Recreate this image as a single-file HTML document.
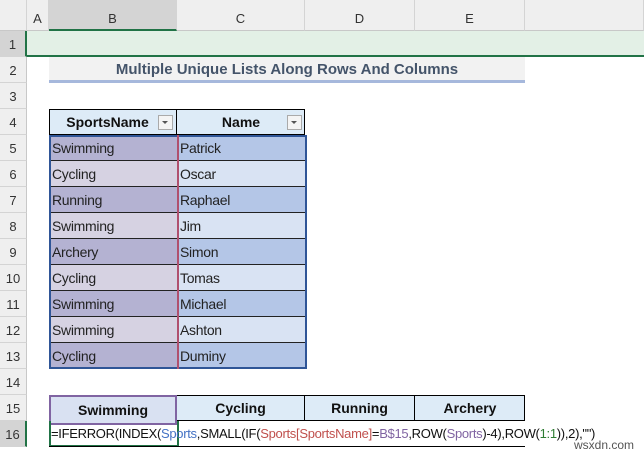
<!DOCTYPE html>
<html><head><style>
body{margin:0;width:644px;height:461px;overflow:hidden;background:#fff;font-family:"Liberation Sans",sans-serif;position:relative}
.a{position:absolute;box-sizing:border-box}
.ch{top:0;height:31px;background:#efefef;border-right:1px solid #d4d4d4;border-bottom:1px solid #c8c8c8;text-align:center;line-height:38px;font-size:13px;color:#333}
.rh{left:0;width:27px;height:26px;background:#efefef;border-bottom:1px solid #d4d4d4;border-right:1px solid #c8c8c8;text-align:center;line-height:28px;font-size:13px;color:#333}
.c{font-size:14px;letter-spacing:-0.3px;line-height:26px;padding-left:3px;color:#222}
.h{font-weight:bold;text-align:center;font-size:14px;line-height:26px;color:#111}
.dd{position:absolute;right:3px;top:6px;width:13px;height:13px;border:1px solid #aaa;background:#f4f4f4}
.dd:after{content:"";position:absolute;left:3px;top:5px;border-left:3px solid transparent;border-right:3px solid transparent;border-top:3px solid #555}
</style></head><body>
<div class="a ch" style="left:0;width:27px"></div>
<div class="a ch" style="left:27px;width:22px">A</div>
<div class="a ch" style="left:49px;width:128px;background:#d4d4d4;border-bottom:2px solid #217346">B</div>
<div class="a ch" style="left:177px;width:128px">C</div>
<div class="a ch" style="left:305px;width:110px">D</div>
<div class="a ch" style="left:415px;width:110px">E</div>
<div class="a ch" style="left:525px;width:119px"></div>
<div class="a" style="left:27px;top:31px;width:617px;height:26px;background:#e3f0e6;border-bottom:2px solid #217346"></div>
<div class="a" style="left:49px;top:57px;width:476px;height:26px;background:#f2f2f2;border-bottom:3px solid #a6b8dc;text-align:center;font-weight:bold;font-size:15px;line-height:26px;color:#44546a">Multiple Unique Lists Along Rows And Columns</div>
<div class="a" style="left:49px;top:109px;width:256px;height:26px;background:#ddebf7;border:1px solid #000"></div>
<div class="a h" style="left:49px;top:109px;width:128px;border-right:1px solid #000;padding-right:10px">SportsName<span class="dd"></span></div>
<div class="a h" style="left:177px;top:109px;width:128px">Name<span class="dd"></span></div>
<div id="t"></div>
<div class="a" style="left:49px;top:135px;width:258px;height:234px;border:2px solid #2f5597"></div>
<div class="a" style="left:177px;top:135px;width:2px;height:234px;background:#b0506e"></div>
<div class="a" style="left:49px;top:395px;width:476px;height:26px;background:#ddebf7;border:1px solid #000"></div>
<div class="a h" style="left:49px;top:395px;width:128px;background:#d9e1f2;border:2px solid #8064a2">Swimming</div>
<div class="a h" style="left:177px;top:395px;width:128px;border-right:1px solid #000">Cycling</div>
<div class="a h" style="left:305px;top:395px;width:110px;border-right:1px solid #000">Running</div>
<div class="a h" style="left:415px;top:395px;width:110px">Archery</div>
<div class="a" style="left:49px;top:421px;width:130px;height:26px;border:2px solid #217346;border-top:none"></div>
<div class="a" style="left:49px;top:446px;width:476px;height:1px;background:#000"></div>
<div class="a" style="left:51px;top:422px;font-size:13px;letter-spacing:-0.3px;line-height:24px;white-space:nowrap;color:#111">=IFERROR(INDEX(<span style="color:#4472c4">Sports</span>,SMALL(IF(<span style="color:#c0504d">Sports[SportsName]</span>=<span style="color:#8064a2">B$15</span>,ROW(<span style="color:#8064a2">Sports</span>)-4),ROW(<span style="color:#2e7d32">1:1</span>)),2),"")</div>
<div class="a" style="left:574px;top:438px;font-size:12px;color:#555">wsxdn.com</div>
<script>
var r='';for(var i=1;i<=16;i++){r+='<div class="a rh" style="top:'+(31+(i-1)*26)+'px;'+(i==1||i==16?'background:#d4d4d4;border-right:2px solid #217346':'')+'">'+i+'</div>';}
var s=['Swimming','Cycling','Running','Swimming','Archery','Cycling','Swimming','Swimming','Cycling'];
var n=['Patrick','Oscar','Raphael','Jim','Simon','Tomas','Michael','Ashton','Duminy'];
for(var j=0;j<9;j++){var t=135+j*26,o=j%2==0;
r+='<div class="a c" style="left:49px;top:'+t+'px;width:128px;height:26px;background:'+(o?'#b4b2d2':'#d6d2e2')+';border-bottom:1px solid #222">'+s[j]+'</div>';
r+='<div class="a c" style="left:177px;top:'+t+'px;width:128px;height:26px;background:'+(o?'#b4c6e7':'#d9e3f3')+';border-bottom:1px solid #222">'+n[j]+'</div>';}
document.getElementById('t').innerHTML=r;
</script>
</body></html>
